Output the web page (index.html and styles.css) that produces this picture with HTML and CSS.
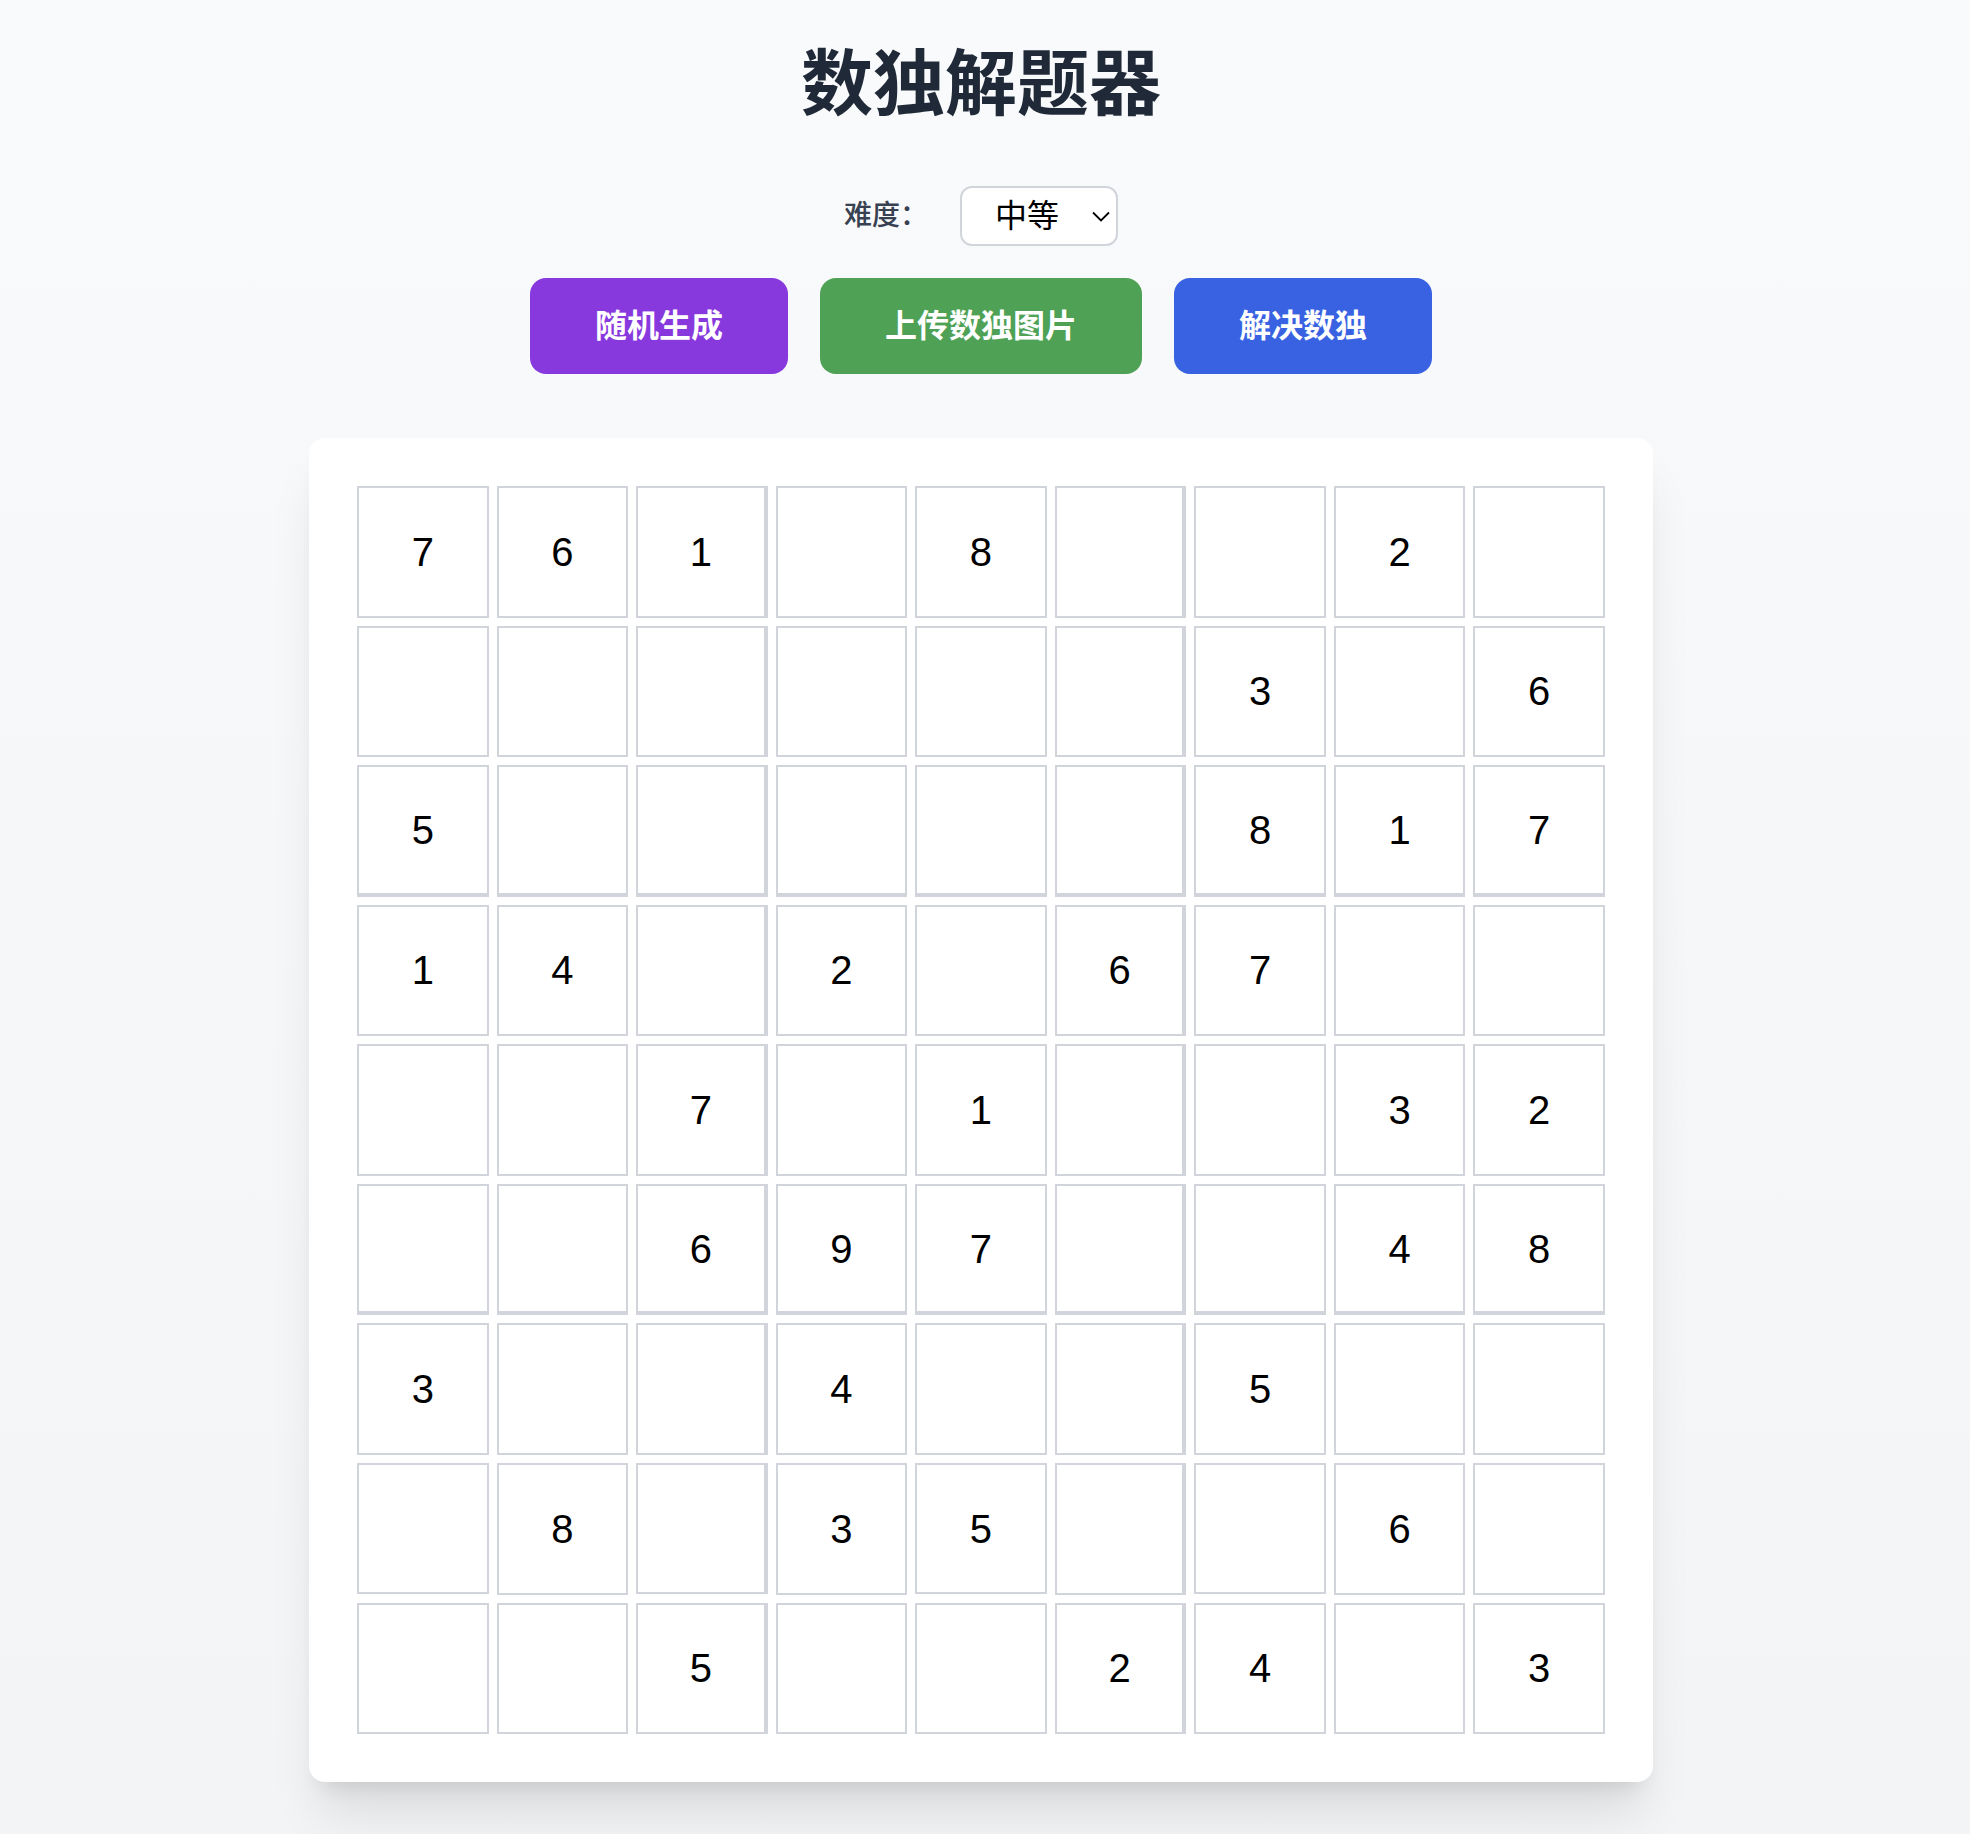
FILE: index.html
```html
<!DOCTYPE html>
<html lang="zh-CN">
<head>
<meta charset="UTF-8">
<meta name="viewport" content="width=device-width, initial-scale=1">
<title>数独解题器</title>
<link rel="stylesheet" href="styles.css">
</head>
<body>
<main class="page">
  <h1 class="title">数独解题器</h1>
  <div class="controls">
    <div class="difficulty">
      <label class="difficulty-label" for="difficulty">难度：</label>
      <div class="select-wrap">
        <select class="select" id="difficulty">
          <option>简单</option>
          <option selected>中等</option>
          <option>困难</option>
        </select>
        <svg class="select-arrow" viewBox="0 0 18 12" aria-hidden="true"><path d="M1 1.5l8 8 8-8" fill="none" stroke="#000" stroke-width="1.8"/></svg>
      </div>
    </div>
    <div class="actions">
      <button class="button button-generate" type="button">随机生成</button>
      <button class="button button-upload" type="button">上传数独图片</button>
      <button class="button button-solve" type="button">解决数独</button>
    </div>
  </div>
  <section class="card">
    <div class="board" id="board"></div>
  </section>
</main>
<script src="board.js"></script>
</body>
</html>
```
FILE: board.js
```js
const puzzle = [
  '761.8..2.',
  '......3.6',
  '5.....817',
  '14.2.67..',
  '..7.1..32',
  '..697..48',
  '3..4..5..',
  '.8.35..6.',
  '..5..24.3',
];

const board = document.getElementById('board');
puzzle.forEach((line, row) => {
  [...line].forEach((digit, column) => {
    const cell = document.createElement('input');
    cell.type = 'text';
    cell.inputMode = 'numeric';
    cell.maxLength = 1;
    cell.className = 'cell';
    if (column === 2 || column === 5) cell.classList.add('cell-box-right');
    if (row === 2 || row === 5) cell.classList.add('cell-box-bottom');
    cell.setAttribute('aria-label', `第${row + 1}行第${column + 1}列`);
    cell.value = digit === '.' ? '' : digit;
    board.append(cell);
  });
});
```
FILE: styles.css
```css
*,
*::before,
*::after {
  box-sizing: border-box;
}

body {
  margin: 0;
  min-height: 100vh;
  background: linear-gradient(to bottom, #f9fafb, #f3f4f6);
  font-family: "Liberation Sans", "Noto Sans CJK SC", sans-serif;
}

.page {
  display: flex;
  flex-direction: column;
  align-items: center;
  padding: 44px 40px 32px 32px;
}

.title {
  margin: 0 0 62px;
  font-size: 72px;
  line-height: 80px;
  font-weight: 700;
  color: #1f2937;
}

.controls {
  display: flex;
  flex-direction: column;
  align-items: center;
  gap: 32px;
  margin-bottom: 64px;
}

.difficulty {
  display: flex;
  align-items: center;
  gap: 32px;
}

.difficulty-label {
  font-size: 28px;
  line-height: 40px;
  font-weight: 500;
  color: #374151;
}

.select-wrap {
  position: relative;
}

.select {
  appearance: none;
  display: block;
  height: 60px;
  margin: 0;
  padding: 0 56px 0 33px;
  border: 2px solid #d1d5db;
  border-radius: 12px;
  background: #fff;
  color: #000;
  font: inherit;
  font-size: 32px;
}

.select-arrow {
  position: absolute;
  top: 25px;
  right: 8px;
  width: 18px;
  height: 12px;
  pointer-events: none;
}

.actions {
  display: flex;
  flex-wrap: wrap;
  justify-content: center;
  gap: 32px;
}

.button {
  padding: 24px 65px;
  border: 0;
  border-radius: 16px;
  color: #fff;
  font: inherit;
  font-size: 32px;
  line-height: 48px;
  font-weight: 700;
  cursor: pointer;
}

.button-generate {
  background: #8839de;
}

.button-upload {
  background: #4ea155;
}

.button-solve {
  background: #3862e2;
}

.card {
  width: 100%;
  max-width: 1344px;
  padding: 48px;
  border-radius: 16px;
  background: #fff;
  box-shadow: 0 40px 50px -10px rgb(0 0 0 / 10%), 0 16px 20px -12px rgb(0 0 0 / 10%);
}

.board {
  display: grid;
  grid-template-columns: repeat(9, minmax(0, 1fr));
  gap: 8px;
}

.cell {
  width: 100%;
  min-width: 0;
  aspect-ratio: 1;
  margin: 0;
  padding: 1px 0 0;
  border: 2px solid #d1d5db;
  border-radius: 0;
  background: #fff;
  color: #000;
  font: inherit;
  font-size: 40px;
  text-align: center;
}

.cell-box-right {
  border-right-width: 4px;
}

.cell-box-bottom {
  border-bottom-width: 4px;
}
```
